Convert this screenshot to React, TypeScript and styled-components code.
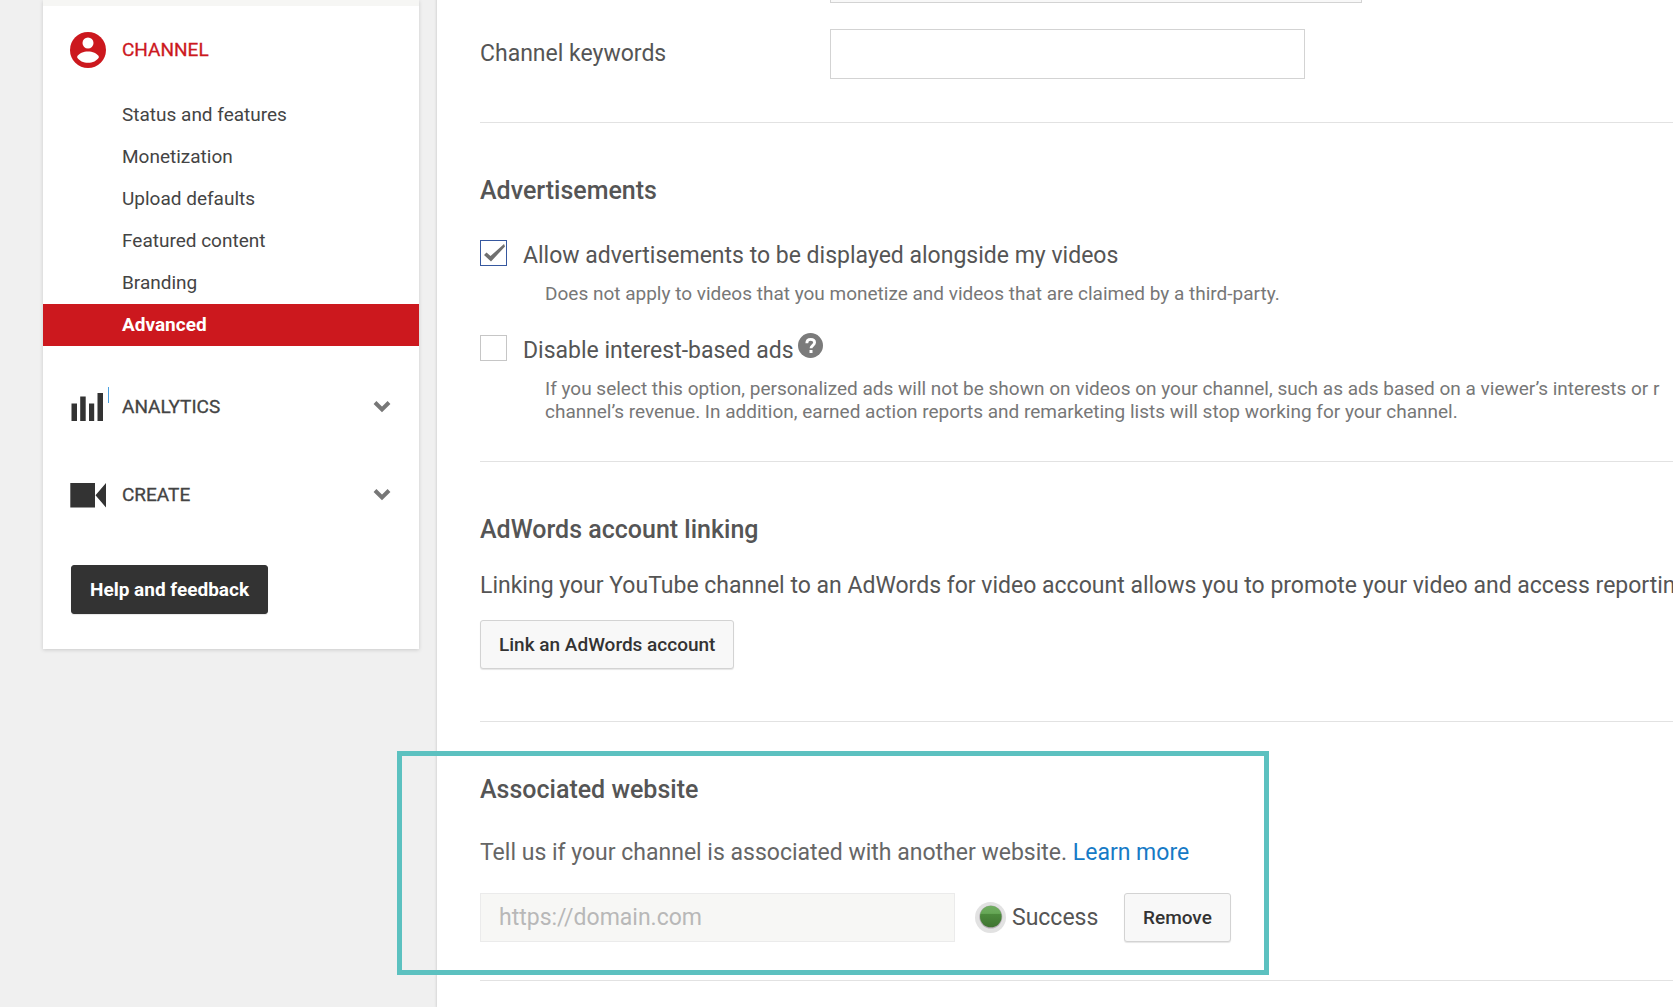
import React, { useState } from 'react';
import styled, { createGlobalStyle, css } from 'styled-components';

const GlobalStyle = createGlobalStyle`
  *, *::before, *::after { box-sizing: border-box; }
  body {
    margin: 0;
    background: #f0f0f0;
    color: #555;
    font-family: Roboto, "Liberation Sans", sans-serif;
    font-size: 23px;
    line-height: 26px;
  }
  button, input, select { font-family: inherit; }
`;

const Page = styled.div`
  display: flex;
  align-items: flex-start;
  gap: 18px;
  height: 100vh;
  padding-left: 43px;
  overflow: hidden;
`;

const Sidebar = styled.aside`
  flex: 0 0 376px;
  padding-bottom: 35px;
  border-top: 6px solid #f6f6f4;
  background: #fff;
  box-shadow: 0 1px 4px rgba(0, 0, 0, 0.16);
`;

const GroupButton = styled.button<{ $active?: boolean }>`
  display: flex;
  align-items: center;
  width: 100%;
  height: 88px;
  padding: 0 28px 0 27px;
  border: 0;
  background: none;
  color: ${p => (p.$active ? '#cc181e' : '#444')};
  font-size: 19px;
  text-align: left;
  cursor: pointer;
`;

const GroupIcon = styled.svg`
  flex: 0 0 40px;
  width: 40px;
  height: 36px;
  margin-right: 12px;
  overflow: visible;
`;

const GroupLabel = styled.span`
  flex: 1;
  padding-bottom: 2px;
  -webkit-text-stroke: 0.3px currentColor;
`;

const Chevron = styled.svg`
  width: 18px;
  height: 12px;
`;

const SubList = styled.ul`
  margin: 0 0 17px;
  padding: 0;
  list-style: none;
`;

const SubLink = styled.a<{ $current?: boolean }>`
  display: block;
  height: 42px;
  padding-left: 79px;
  color: #444;
  font-size: 19px;
  line-height: 42px;
  text-decoration: none;
  ${p => p.$current && css`
    background: #cc181e;
    color: #fff;
    font-weight: 700;
  `}
`;

const Button = styled.button<{ $dark?: boolean }>`
  height: 49px;
  padding: 0 18px;
  border: 1px solid ${p => (p.$dark ? '#333' : '#d3d3d3')};
  border-radius: 3px;
  background: ${p => (p.$dark ? '#333' : '#f8f8f8')};
  box-shadow: 0 1px 1px rgba(0, 0, 0, 0.1);
  color: ${p => (p.$dark ? '#fff' : '#333')};
  font-size: 19px;
  font-weight: ${p => (p.$dark ? 700 : 500)};
  white-space: nowrap;
  cursor: pointer;
`;

const HelpArea = styled.div`
  padding: 26px 28px 0;
`;

const Main = styled.main`
  flex: 1;
  min-width: 0;
  min-height: calc(100vh + 46px);
  margin-top: -46px;
  padding-left: 43px;
  background: #fff;
  box-shadow: 0 1px 3px rgba(0, 0, 0, 0.2);
  white-space: nowrap;
`;

const Section = styled.section`
  position: relative;
  border-bottom: 1px solid #e2e2e2;
`;

const FormSection = styled(Section)`
  display: grid;
  gap: 26px;
  padding-bottom: 43px;
`;

const FormRow = styled.div`
  display: grid;
  grid-template-columns: 350px 1fr;
  align-items: center;
`;

const CountrySelect = styled.select`
  width: 532px;
  height: 49px;
  border: 1px solid #d3d3d3;
  border-radius: 0;
  background: #f8f8f8;
  appearance: none;
`;

const TextBox = styled.input`
  width: 475px;
  height: 50px;
  padding: 0 18px;
  border: 1px solid #d3d3d3;
  border-radius: 0;
  background: #fff;
  color: #555;
  font-size: 23px;

  &:disabled {
    height: 49px;
    border-color: #ebebeb;
    background: #f7f7f5;
    color: #b8b8b8;
  }
`;

const Heading = styled.h2`
  margin: 0;
  color: #555;
  font-size: 25px;
  font-weight: 500;
  line-height: 28px;
`;

const AdsSection = styled(Section)`
  padding: 54px 0 38px;
`;

const Option = styled.div`
  display: grid;
  grid-template-columns: 27px 1fr;
  column-gap: 16px;
  margin-top: 35px;

  & + & { margin-top: 30px; }
`;

const CheckBox = styled.input`
  width: 27px;
  height: 26px;
  margin: 0;
  border: 1px solid #c6c6c6;
  background: #fff;
  appearance: none;

  &:checked {
    border-color: #36589f;
    background: #fff url("data:image/svg+xml,%3Csvg xmlns='http://www.w3.org/2000/svg' viewBox='0 0 25 24'%3E%3Cpath d='M3 14l2.500-2.500 4 3.500L23 3l1 2.500-14 15z' fill='%23707070'/%3E%3C/svg%3E") center / 25px 24px;
  }
`;

const OptionLine = styled.div`
  display: flex;
  gap: 4px;
  padding-top: 3px;
`;

const HelpIcon = styled.svg`
  width: 25px;
  height: 25px;
  margin-top: -5px;
`;

const Note = styled.p`
  grid-column: 2;
  margin: 13px 0 0;
  padding-left: 22px;
  color: #777;
  font-size: 19px;
  line-height: 23px;
`;

const LinkingSection = styled(Section)`
  padding: 54px 0 52px;
`;

const Paragraph = styled.p<{ $soft?: boolean }>`
  margin: 29px 0 21px;
  color: ${p => (p.$soft ? '#666' : '#555')};
`;

const WebsiteSection = styled(Section)`
  padding: 54px 0 38px;
`;

const WebsiteText = styled(Paragraph)`
  margin: 36px 0 27px;
`;

const LearnMore = styled.a`
  color: #167ac6;
  text-decoration: none;
`;

const WebsiteRow = styled.div`
  display: flex;
  align-items: center;
`;

const Status = styled.div`
  display: flex;
  align-items: center;
  gap: 6px;
  width: 169px;
  padding-left: 20px;
`;

const StatusLight = styled.svg`
  width: 31px;
  height: 31px;
`;

const Highlight = styled.div`
  position: absolute;
  top: 29px;
  left: -83px;
  width: 872px;
  height: 224px;
  border: 5px solid #5cc1c0;
  pointer-events: none;
`;

const subItems = [
  'Status and features',
  'Monetization',
  'Upload defaults',
  'Featured content',
  'Branding',
  'Advanced',
];

function Arrow() {
  return (
    <Chevron viewBox="0 0 18 12" aria-hidden="true">
      <path d="M2 1.500l7 7 7-7" fill="none" stroke="#777" strokeWidth="4" />
    </Chevron>
  );
}

export default function App() {
  const [allowAds, setAllowAds] = useState(true);
  const [disableInterest, setDisableInterest] = useState(false);

  return (
    <>
      <GlobalStyle />
      <Page>
        <Sidebar>
          <nav>
            <GroupButton $active>
              <GroupIcon viewBox="0 0 40 36" aria-hidden="true">
                <circle cx="18" cy="18" r="18" fill="#cc181e" />
                <circle cx="18" cy="11" r="5.5" fill="#fff" />
                <path d="M7 25c2-4 6.500-5.500 11-5.500s9 1.500 11 5.500c-2 4-6.500 5.800-11 5.800S9 29 7 25z" fill="#fff" />
              </GroupIcon>
              <GroupLabel>CHANNEL</GroupLabel>
            </GroupButton>
            <SubList>
              {subItems.map(item => (
                <li key={item}>
                  <SubLink href="#" $current={item === 'Advanced'}>{item}</SubLink>
                </li>
              ))}
            </SubList>
            <GroupButton>
              <GroupIcon viewBox="0 0 40 36" aria-hidden="true">
                <path d="M1.500 14.500h5.500v17.500h-5.500zM10.200 7.500h5.500v24.500h-5.500zM19 14.500h5.200v17.500H19zM27.500 4h5.500v28h-5.500z" fill="#333" />
                <path d="M38 -2h1v16h-1z" fill="#4aa0e0" />
              </GroupIcon>
              <GroupLabel>ANALYTICS</GroupLabel>
              <Arrow />
            </GroupButton>
            <GroupButton>
              <GroupIcon viewBox="0 0 40 36" aria-hidden="true">
                <path d="M0.300 6h24.700v24.500H0.300zM36 6v24.500L25.500 18.300z" fill="#333" />
              </GroupIcon>
              <GroupLabel>CREATE</GroupLabel>
              <Arrow />
            </GroupButton>
          </nav>
          <HelpArea>
            <Button $dark>Help and feedback</Button>
          </HelpArea>
        </Sidebar>

        <Main>
          <FormSection>
            <FormRow>
              <span />
              <CountrySelect aria-label="Country" />
            </FormRow>
            <FormRow>
              <label htmlFor="keywords">Channel keywords</label>
              <TextBox id="keywords" type="text" />
            </FormRow>
          </FormSection>

          <AdsSection>
            <Heading>Advertisements</Heading>
            <Option>
              <CheckBox
                id="allow-ads"
                type="checkbox"
                checked={allowAds}
                onChange={e => setAllowAds(e.target.checked)}
              />
              <OptionLine>
                <label htmlFor="allow-ads">Allow advertisements to be displayed alongside my videos</label>
              </OptionLine>
              <Note>Does not apply to videos that you monetize and videos that are claimed by a third-party.</Note>
            </Option>
            <Option>
              <CheckBox
                id="disable-interest"
                type="checkbox"
                checked={disableInterest}
                onChange={e => setDisableInterest(e.target.checked)}
              />
              <OptionLine>
                <label htmlFor="disable-interest">Disable interest-based ads</label>
                <HelpIcon viewBox="0 0 25 25" aria-hidden="true">
                  <circle cx="12.500" cy="12.500" r="12.500" fill="#7b7b7b" />
                  <path d="M8.800 10.200c0-2.500 1.500-3.800 3.900-3.800s3.900 1.300 3.900 3.200c0 2.600-3.600 2.800-3.600 5.600" fill="none" stroke="#fff" strokeWidth="2.800" />
                  <path d="M11.500 17h3v3h-3z" fill="#fff" />
                </HelpIcon>
              </OptionLine>
              <Note>
                If you select this option, personalized ads will not be shown on videos on your channel, such as ads based on a viewer’s interests or r
                <br />
                channel’s revenue. In addition, earned action reports and remarketing lists will stop working for your channel.
              </Note>
            </Option>
          </AdsSection>

          <LinkingSection>
            <Heading>AdWords account linking</Heading>
            <Paragraph>
              Linking your YouTube channel to an AdWords for video account allows you to promote your video and access reporting
            </Paragraph>
            <Button>Link an AdWords account</Button>
          </LinkingSection>

          <WebsiteSection>
            <Heading>Associated website</Heading>
            <WebsiteText $soft>
              Tell us if your channel is associated with another website. <LearnMore href="#">Learn more</LearnMore>
            </WebsiteText>
            <WebsiteRow>
              <TextBox aria-label="Website" type="text" defaultValue="https://domain.com" disabled />
              <Status>
                <StatusLight viewBox="0 0 31 31" aria-hidden="true">
                  <defs>
                    <linearGradient id="light" x1="0" y1="0" x2="0" y2="1">
                      <stop offset="0" stopColor="#71ad62" />
                      <stop offset="0.360" stopColor="#66a756" />
                      <stop offset="0.370" stopColor="#4d8b3d" />
                      <stop offset="1" stopColor="#3f7431" />
                    </linearGradient>
                  </defs>
                  <circle cx="15.500" cy="15.500" r="15.500" fill="#e2e2e2" />
                  <circle cx="15.800" cy="15" r="11.500" fill="#b5aeb5" />
                  <circle cx="15.800" cy="14.500" r="10.800" fill="url(#light)" />
                </StatusLight>
                <span>Success</span>
              </Status>
              <Button>Remove</Button>
            </WebsiteRow>
            <Highlight />
          </WebsiteSection>
        </Main>
      </Page>
    </>
  );
}
